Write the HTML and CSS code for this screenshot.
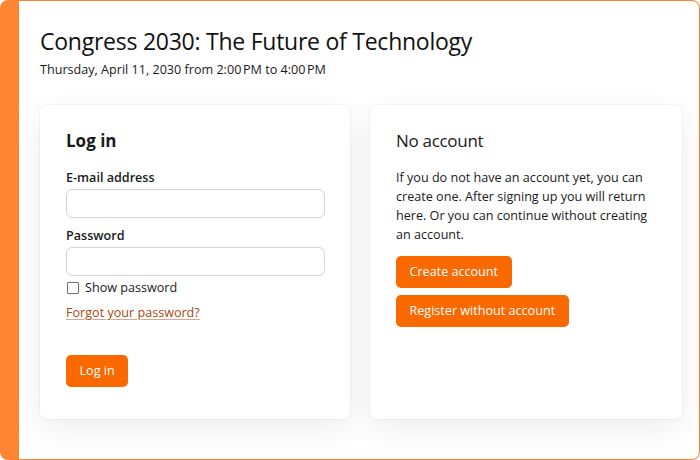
FILE: index.html
```html
<!DOCTYPE html>
<html lang="en">
<head>
<meta charset="utf-8">
<title>Congress 2030: Log in</title>
<link rel="stylesheet" href="styles.css">
</head>
<body>
<div class="frame">
  <header class="event">
    <h1 class="event-title">Congress 2030: The Future of Technology</h1>
    <p class="event-date">Thursday, April 11, 2030 from 2:00&#8239;PM to 4:00&#8239;PM</p>
  </header>
  <main class="cards">
    <section class="card">
      <h2 class="card-title card-title-bold">Log in</h2>
      <form class="login-form">
        <label class="field-label" for="email">E-mail address</label>
        <input class="field-input" id="email" type="email">
        <label class="field-label field-label-second" for="pw">Password</label>
        <input class="field-input" id="pw" type="password">
        <label class="check">
          <span class="check-box"></span>
          <span class="check-text">Show password</span>
        </label>
        <a class="forgot" href="#">Forgot your password?</a>
        <div class="actions">
          <button class="btn" type="button">Log in</button>
        </div>
      </form>
    </section>
    <section class="card">
      <h2 class="card-title">No account</h2>
      <p class="card-text">If you do not have an account yet, you can create one. After signing up you will return here. Or you can continue without creating an account.</p>
      <div class="btn-stack">
        <button class="btn" type="button">Create account</button>
        <button class="btn" type="button">Register without account</button>
      </div>
    </section>
  </main>
</div>
</body>
</html>
```

FILE: styles.css
```css
* { box-sizing: border-box; }
html, body {
  margin: 0;
  padding: 0;
  background: #ffffff;
}
body {
  font-family: "Open Sans", "Noto Sans", sans-serif;
  color: #1a1a1a;
}
.frame {
  width: 700px;
  height: 460px;
  border: 1px solid #ff8533;
  border-left-width: 19px;
  border-radius: 8px;
  background: #ffffff;
  padding: 24px 16px 0 21px;
  overflow: hidden;
}
.event-title {
  margin: 0;
  font-size: 23px;
  letter-spacing: -0.25px;
  line-height: 32px;
  font-weight: 400;
  color: #111;
}
.event-date {
  margin: 4px 0 0;
  font-size: 12.6px;
  line-height: 18px;
  color: #1a1a1a;
}
.cards {
  margin-top: 26px;
  display: grid;
  grid-template-columns: 310px 312px;
  gap: 20px;
}
.card {
  height: 314px;
  background: #fff;
  border-radius: 7px;
  padding: 24px 26px;
  box-shadow: 0 0 0 1px rgba(0,0,0,0.035), 0 10px 32px rgba(0,0,0,0.07);
}
.card-title {
  margin: 0;
  font-size: 17px;
  letter-spacing: -0.3px;
  line-height: 24px;
  font-weight: 400;
}
.card-title-bold {
  font-weight: 700;
  letter-spacing: 0;
}
.login-form {
  display: flex;
  flex-direction: column;
  align-items: flex-start;
  margin-top: 16px;
}
.field-label {
  font-size: 12.6px;
  line-height: 18px;
  font-weight: 600;
}
.field-label-second { margin-top: 9px; }
.field-input {
  margin-top: 2px;
  width: 259px;
  height: 29px;
  border: 1px solid #d4d4d4;
  border-radius: 6px;
  background: #fff;
}
.check {
  display: flex;
  align-items: center;
  margin-top: 3px;
  gap: 6px;
  padding-left: 1px;
}
.check-box {
  width: 12px;
  height: 12px;
  border: 1px solid #6f6f6f;
  border-radius: 1px;
  background: #fff;
}
.check-text {
  font-size: 12.6px;
  line-height: 18px;
}
.forgot {
  margin-top: 7px;
  font-size: 12.6px;
  line-height: 18px;
  color: #a94715;
  text-decoration: underline;
  text-decoration-color: #d9a88a;
  text-underline-offset: 2px;
}
.actions { margin-top: 33px; }
.btn {
  font-family: inherit;
  font-size: 12.6px;
  line-height: 18px;
  color: #fff;
  background: #fa6800;
  border: none;
  border-radius: 5px;
  height: 32px;
  padding: 0 13.5px;
  cursor: pointer;
}
.card-text {
  margin: 15px 0 0;
  font-size: 12.6px;
  line-height: 19px;
}
.btn-stack {
  margin-top: 12px;
  display: flex;
  flex-direction: column;
  align-items: flex-start;
  gap: 7px;
}
```
